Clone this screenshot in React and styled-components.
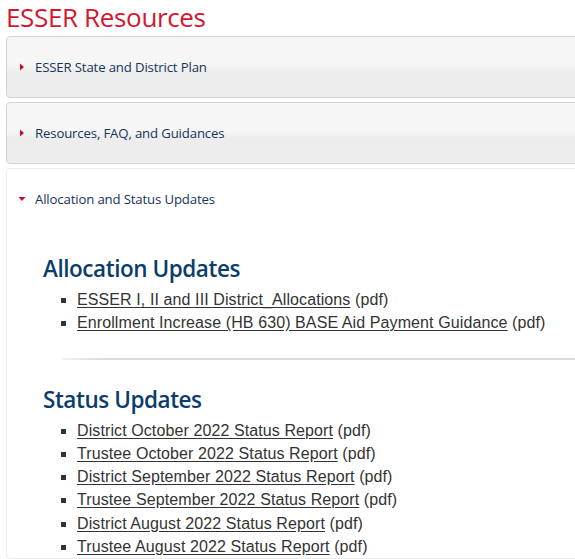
import React from "react";
import styled, { createGlobalStyle } from "styled-components";

const Global = createGlobalStyle`
  html, body { margin: 0; padding: 0; background: #fff; }
  body { overflow: hidden; }
`;

const Page = styled.div`
  padding: 0 0 0 6px;
  width: 585px;
  font-family: "Open Sans", "Noto Sans", sans-serif;
`;

const Title = styled.h1`
  margin: 0;
  padding-top: 1px;
  height: 35px;
  font-family: "Open Sans", sans-serif;
  font-weight: 400;
  font-size: 26px;
  line-height: 32px;
  letter-spacing: -0.35px;
  color: #d3172e;
`;

const Accordion = styled.div`
  display: flex;
  flex-direction: column;
  gap: 4px;
`;

const Panel = styled.div`
  border: 1px solid ${(p) => (p.$open ? "#ececec" : "#d3d3d3")};
  border-radius: 4px;
  background: ${(p) =>
    p.$open ? "#fff" : "linear-gradient(#f6f6f6 0%, #f6f6f6 45%, #ededed 60%, #ededed 100%)"};
`;

const Header = styled.div`
  height: 60px;
  display: flex;
  align-items: center;
  padding-left: 11px;
  gap: 9px;
  font-size: 13.2px;
  letter-spacing: -0.15px;
  color: #15355a;
`;

const Arrow = styled.svg`
  width: 8px;
  height: 8px;
  flex: none;
`;

const Content = styled.div`
  padding: 24px 0 0 36px;
`;

const Heading = styled.h2`
  margin: 0 0 3px;
  font-family: "Open Sans", sans-serif;
  font-weight: 600;
  font-size: 22.5px;
  line-height: 32px;
  letter-spacing: -0.45px;
  color: #0b3d6b;
`;

const List = styled.ul`
  margin: 0;
  padding: 0 0 0 34px;
  list-style: square;
  font-family: "Liberation Sans", Arial, sans-serif;
  font-size: 16px;
  line-height: 23.3px;
  letter-spacing: 0.1px;
  color: #333;
`;

const Link = styled.a`
  color: #333;
  text-decoration: underline;
  text-underline-offset: 2px;
`;

const Divider = styled.hr`
  margin: 23px 0 24px 19px;
  border: 0;
  height: 2px;
  background: linear-gradient(to right, #f2f2f2, #dcdcdc 40px, #dcdcdc);
`;

const sections = [
  { title: "ESSER State and District Plan" },
  { title: "Resources, FAQ, and Guidances" },
];

const allocations = [
  "ESSER I, II and III District_Allocations",
  "Enrollment Increase (HB 630) BASE Aid Payment Guidance",
];

const statuses = [
  "District October 2022 Status Report",
  "Trustee October 2022 Status Report",
  "District September 2022 Status Report",
  "Trustee September 2022 Status Report",
  "District August 2022 Status Report",
  "Trustee August 2022 Status Report",
];

const RightArrow = () => (
  <Arrow viewBox="0 0 8 8">
    <path d="M2 0.5 L6 4 L2 7.5 Z" fill="#cc0e24" />
  </Arrow>
);

const DownArrow = () => (
  <Arrow viewBox="0 0 8 8">
    <path d="M0.5 2 L7.5 2 L4 6 Z" fill="#cc0e24" />
  </Arrow>
);

export default function App() {
  return (
    <Page>
      <Global />
      <Title>ESSER Resources</Title>
      <Accordion>
        {sections.map((s) => (
          <Panel key={s.title}>
            <Header>
              <RightArrow />
              {s.title}
            </Header>
          </Panel>
        ))}
        <Panel $open>
          <Header>
            <DownArrow />
            Allocation and Status Updates
          </Header>
          <Content>
            <Heading>Allocation Updates</Heading>
            <List>
              {allocations.map((a) => (
                <li key={a}>
                  <Link href="#">{a}</Link> (pdf)
                </li>
              ))}
            </List>
            <Divider />
            <Heading>Status Updates</Heading>
            <List>
              {statuses.map((a) => (
                <li key={a}>
                  <Link href="#">{a}</Link> (pdf)
                </li>
              ))}
            </List>
          </Content>
        </Panel>
      </Accordion>
    </Page>
  );
}
